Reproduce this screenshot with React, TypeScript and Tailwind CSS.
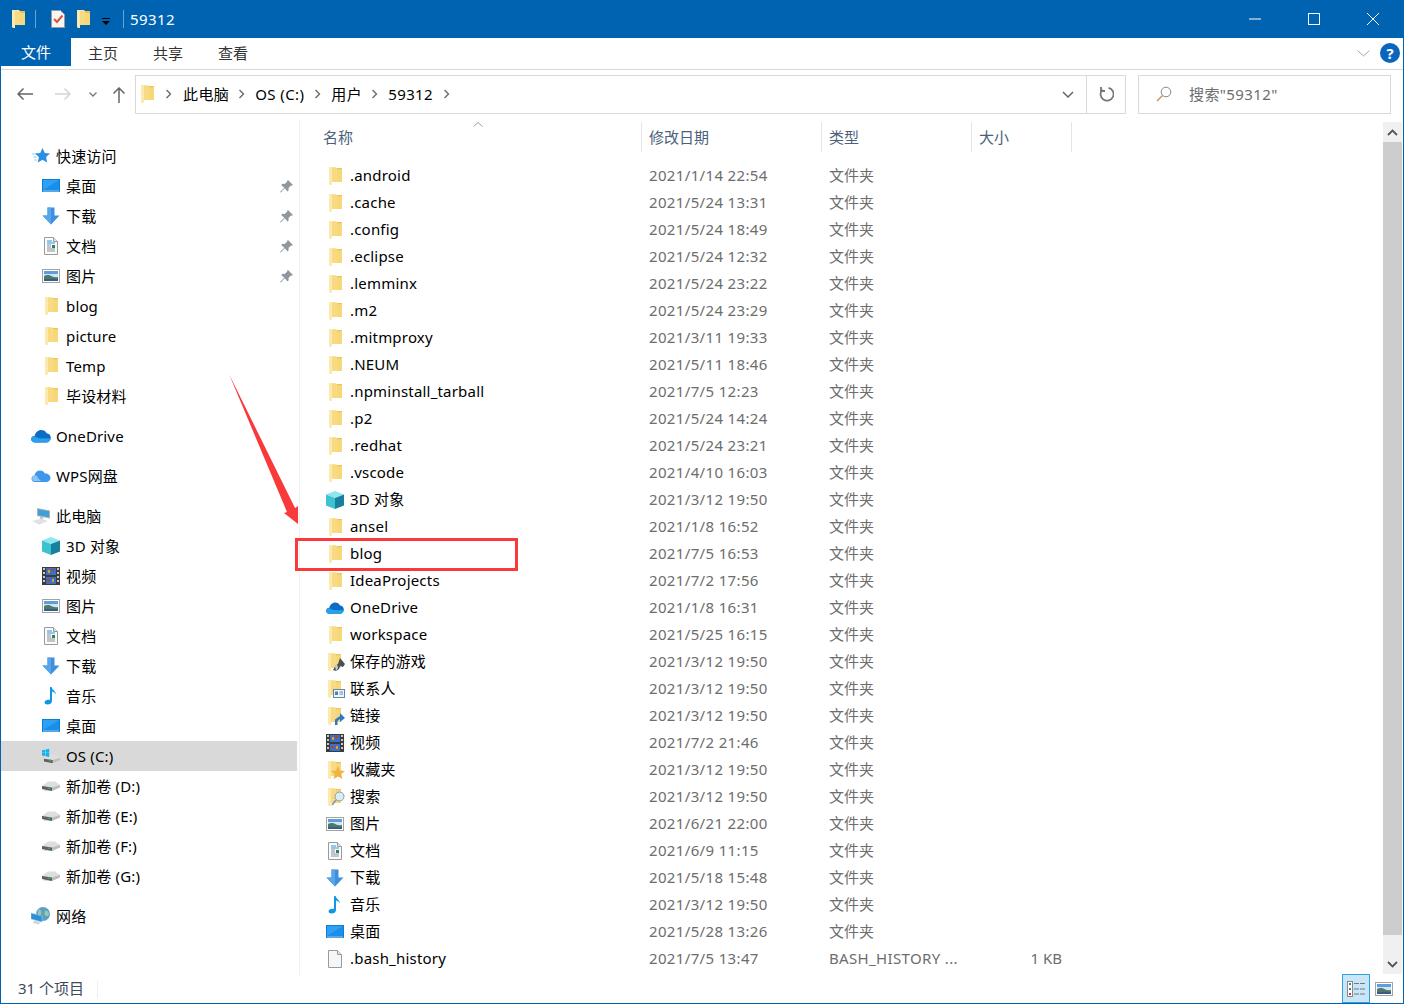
import type { ReactNode } from "react";

// --- 图标 ---
function Folder({ className = "" }: { className?: string }) {
  return (
    <svg className={className} width="13" height="18" viewBox="0 0 13 18">
      <path d="M3 1h5l1 1.200h4V15H3z" fill="#f7d878" />
      <path d="M8 1h5v1.500H8z" fill="#eec45a" />
      <path d="M0 0h7.500v14.500L3 15v3H1.500L0 17z" fill="#fae39a" />
      <path d="M3 1h4.500v13.500L3 15z" fill="#f8da82" />
      <path d="M0 0h3v18H1.500L0 17z" fill="#fbe9ae" />
    </svg>
  );
}

function Desktop() {
  return (
    <svg width="18" height="14" viewBox="0 0 18 14">
      <rect width="18" height="13" fill="#0a7fd6" />
      <path d="M1 1h16v10H1z" fill="#2da2f5" />
      <path d="M1 11l16-10v10z" fill="#1a8ee8" />
      <path d="M1 11.600h16v.8H1z" fill="#cfe9fb" />
    </svg>
  );
}

function Download() {
  return (
    <svg width="18" height="18" viewBox="0 0 18 18">
      <path d="M5.500 0.500h7v8H17.500L9 17.500 0.500 8.500h5z" fill="#3f8fde" />
      <path d="M5.500 0.500H9v17L0.500 8.500h5z" fill="#58a5ea" />
    </svg>
  );
}

function Doc() {
  return (
    <svg width="14" height="18" viewBox="0 0 14 18">
      <path d="M.5.500h9l4 4v13H.5z" fill="#fbfbfb" stroke="#9a9a9a" />
      <path d="M9.500.500v4h4" fill="#e4e4e4" stroke="#9a9a9a" />
      <path d="M3 4h5M3 6h8" stroke="#2b95e0" />
      <path d="M3 8h4M3 10h4M3 12h8M3 14h8" stroke="#8a8f96" />
      <rect x="8" y="8" width="3" height="3" fill="#2f7d63" />
    </svg>
  );
}

function Pic() {
  return (
    <svg width="18" height="14" viewBox="0 0 18 14">
      <rect x=".5" y=".5" width="17" height="13" fill="#fff" stroke="#a3a3a3" />
      <rect x="2" y="2" width="14" height="10" fill="#cfe4f5" />
      <rect x="2" y="2" width="14" height="3" fill="#5f9ddc" />
      <path d="M2 7c3-1.500 6-1 8 .5 2 .8 4 1 6 .5V12H2z" fill="#4d7a66" />
      <path d="M2 10h14v2H2z" fill="#3a5c85" />
    </svg>
  );
}

function Cube() {
  return (
    <svg width="18" height="18" viewBox="0 0 18 18">
      <path d="M9 0l9 3.500L9 7 0 3.500z" fill="#8fe6ee" />
      <path d="M0 3.500L9 7v11l-9-3.500z" fill="#3cc3d2" />
      <path d="M18 3.500L9 7v11l9-3.500z" fill="#1a7f9c" />
    </svg>
  );
}

function Film() {
  return (
    <svg width="18" height="18" viewBox="0 0 18 18">
      <rect width="18" height="18" fill="#3c3c3c" />
      <path d="M1 1h2v2H1zM1 5h2v2H1zM1 9h2v2H1zM1 13h2v2H1zM15 1h2v2h-2zM15 5h2v2h-2zM15 9h2v2h-2zM15 13h2v2h-2z" fill="#c9c9c9" />
      <rect x="4" y="1" width="10" height="7" fill="#3f6fc4" />
      <rect x="4" y="10" width="10" height="7" fill="#3f6fc4" />
      <path d="M6 3h2v3H6zM10 12h2v3h-2z" fill="#d9a02e" />
      <path d="M9 2h3v2H9zM5 12h3v2H5z" fill="#b0452d" />
    </svg>
  );
}

function Music() {
  return (
    <svg width="14" height="18" viewBox="0 0 14 18">
      <path d="M6 0h1.600c.4 3 4.600 4 4.400 8-.6-2-2.400-3-4-3.400V14c0 2.400-2.200 3.600-4.400 3.600C1.600 17.600.6 16.600.6 15.300.6 13.500 3 12.200 6 12.800z" fill="#0f97e6" />
    </svg>
  );
}

function OneDrive() {
  return (
    <svg width="20" height="14" viewBox="0 0 20 14">
      <path d="M4 13.500C1.800 13.500.2 12 .2 10.200.2 8.200 1.800 6.800 3.700 6.800 4.300 3.600 7 1 10.300 1c2.300 0 4.300 1.200 5.300 3.200 2.400.1 4.200 2 4.200 4.600 0 2.600-1.800 4.700-4.300 4.700z" fill="#0a6cc4" />
      <path d="M4 13.500C1.800 13.500.2 12 .2 10.200.2 8.600 1.300 7.400 2.800 7l5.400 2.200 11.400.3c-.4 2.300-2 4-4.100 4z" fill="#2aa0ea" />
    </svg>
  );
}

function WpsCloud() {
  return (
    <svg width="20" height="14" viewBox="0 0 20 14">
      <path d="M4 13C2 13 .5 11.500.5 9.700.5 8 1.800 6.600 3.500 6.400 4 3.400 6.400 1.500 9 1.500c2.200 0 4 1.200 4.900 3 3 -.2 5.600 1.700 5.600 4.500 0 2.300-1.900 4-4.200 4z" fill="#3f97ec" />
      <path d="M3 12a3 3 0 0 1 .8-5.800c1.600 0 3 1.300 3.200 3l3 2.800z" fill="#8cc4f5" />
    </svg>
  );
}

function Computer() {
  return (
    <svg width="20" height="18" viewBox="0 0 20 18">
      <path d="M6 1l13 2.500v8L6 9z" fill="#a9b4bd" />
      <path d="M7 2.200l11 2.100v6L7 8.200z" fill="#3f9fd8" />
      <path d="M1 14l9-2.500 7 2.500-9 3.500z" fill="#dfe2e5" />
      <path d="M9 9.500l3 .6v2l-3-.6z" fill="#b9c0c6" />
    </svg>
  );
}

function Drive() {
  return (
    <svg width="18" height="10" viewBox="0 0 18 10">
      <path d="M0 5l6-4.500h7l5 3.500v2L8 10H2z" fill="#dedede" />
      <path d="M0 5l10 1.500V10L0 8z" fill="#5f5f5f" />
      <path d="M10 6.500L18 4v2.500L10 10z" fill="#bdbdbd" />
      <rect x="5.500" y="6.500" width="2.500" height="1.500" fill="#35b24a" />
    </svg>
  );
}

function OsDrive() {
  return (
    <svg width="20" height="16" viewBox="0 0 20 16">
      <g transform="translate(2 6)"><Drive /></g>
      <path d="M0 1.500L3.500 1v3.300H0zM4 .9L8 0v4.300H4zM0 4.800h3.500V8L0 7.500zM4 4.800h4V9L4 8.200z" fill="#12b5ee" />
    </svg>
  );
}

function Network() {
  return (
    <svg width="20" height="18" viewBox="0 0 20 18">
      <circle cx="12" cy="7" r="7" fill="#5c9fc9" />
      <path d="M8 2c2 1 3 3 2 5s-3 2-3 0 0-4 1-5zM14 4c2-1 4 1 4 3s-3 3-4 1 0-3 0-4z" fill="#9acb9d" />
      <path d="M0 6l11 3v6L0 12z" fill="#2b8fd8" stroke="#9ec9e8" strokeWidth=".6" />
      <path d="M3 13.500l6 1.500-1 2.500-6-1.500z" fill="#cfd4d8" />
    </svg>
  );
}

function Star() {
  return (
    <svg width="18" height="16" viewBox="0 0 18 16">
      <path d="M10.500 0l2.300 5 5.200.6-3.900 3.500 1.100 5.400-4.700-2.800-4.700 2.800 1.100-5.400L3 5.600 8.200 5z" fill="#2b8fe0" />
      <path d="M0 6h4M1 9h4M2 12h3" stroke="#9ccdf2" />
    </svg>
  );
}

function Pin() {
  return (
    <svg width="13" height="13" viewBox="0 0 13 13">
      <path d="M8 0l5 5-1.200.8-.8-.3L8.500 8l.2 2.300L7.500 11.500 4.800 8.200.8 12.500 0 12l4.300-4.200L1.200 5l1.200-1.200 2.300.2L7.300 1.500 7.100.800z" fill="#8f979e" />
    </svg>
  );
}

function PlainFile() {
  return (
    <svg width="14" height="18" viewBox="0 0 14 18">
      <path d="M.5.500h9l4 4v13H.5z" fill="#f4f6f8" stroke="#9a9a9a" />
      <path d="M9.500.500v4h4" fill="#e4e4e4" stroke="#9a9a9a" />
    </svg>
  );
}

// フォルダ + 小さな印
function BadgedFolder({ badge }: { badge: ReactNode }) {
  return (
    <span className="relative block h-[18px] w-[18px]">
      <Folder className="ml-[2px]" />
      <span className="absolute bottom-0 right-[-1px] flex">{badge}</span>
    </span>
  );
}

const gameBadge = (
  <svg width="12" height="13" viewBox="0 0 12 13">
    <path d="M7 0l5 6-2 3-3-1-1 3-3 2-3-1 3-5 2-1z" fill="#4a4f55" />
    <path d="M2 8l2-2 1 4-2 3z" fill="#c9ced3" />
  </svg>
);
const contactBadge = (
  <svg width="12" height="9" viewBox="0 0 12 9">
    <rect x=".5" y=".5" width="11" height="8" fill="#eef4fa" stroke="#5f86ad" />
    <rect x="2" y="2.500" width="3" height="3.500" fill="#4a82b8" />
    <path d="M6.500 3H10M6.500 5H10" stroke="#6f8aa5" />
  </svg>
);
const linkBadge = (
  <svg width="12" height="12" viewBox="0 0 12 12">
    <path d="M2 12V6.500L7 3V0l5 5-5 4V6L4.500 8v4z" fill="#2f78c4" />
  </svg>
);
const starBadge = (
  <svg width="14" height="13" viewBox="0 0 14 13">
    <path d="M7 0l2 4.400 5 .5-3.700 3.200 1.100 4.900L7 10.400 2.600 13l1.100-4.900L0 4.900l5-.5z" fill="#f2b441" />
  </svg>
);
const searchBadge = (
  <svg width="14" height="15" viewBox="0 0 14 15">
    <circle cx="8.500" cy="5.500" r="4.500" fill="#d9edf7" stroke="#8c9aa5" />
    <path d="M5 9l-4 5" stroke="#8c9aa5" strokeWidth="1.800" />
  </svg>
);

const folder = <Folder />;

type Entry = { name: string; date: string; icon: ReactNode; type?: string; size?: string };

const FILES: Entry[] = [
  { name: ".android", date: "2021/1/14 22:54", icon: folder },
  { name: ".cache", date: "2021/5/24 13:31", icon: folder },
  { name: ".config", date: "2021/5/24 18:49", icon: folder },
  { name: ".eclipse", date: "2021/5/24 12:32", icon: folder },
  { name: ".lemminx", date: "2021/5/24 23:22", icon: folder },
  { name: ".m2", date: "2021/5/24 23:29", icon: folder },
  { name: ".mitmproxy", date: "2021/3/11 19:33", icon: folder },
  { name: ".NEUM", date: "2021/5/11 18:46", icon: folder },
  { name: ".npminstall_tarball", date: "2021/7/5 12:23", icon: folder },
  { name: ".p2", date: "2021/5/24 14:24", icon: folder },
  { name: ".redhat", date: "2021/5/24 23:21", icon: folder },
  { name: ".vscode", date: "2021/4/10 16:03", icon: folder },
  { name: "3D 对象", date: "2021/3/12 19:50", icon: <Cube /> },
  { name: "ansel", date: "2021/1/8 16:52", icon: folder },
  { name: "blog", date: "2021/7/5 16:53", icon: folder },
  { name: "IdeaProjects", date: "2021/7/2 17:56", icon: folder },
  { name: "OneDrive", date: "2021/1/8 16:31", icon: <OneDrive /> },
  { name: "workspace", date: "2021/5/25 16:15", icon: folder },
  { name: "保存的游戏", date: "2021/3/12 19:50", icon: <BadgedFolder badge={gameBadge} /> },
  { name: "联系人", date: "2021/3/12 19:50", icon: <BadgedFolder badge={contactBadge} /> },
  { name: "链接", date: "2021/3/12 19:50", icon: <BadgedFolder badge={linkBadge} /> },
  { name: "视频", date: "2021/7/2 21:46", icon: <Film /> },
  { name: "收藏夹", date: "2021/3/12 19:50", icon: <BadgedFolder badge={starBadge} /> },
  { name: "搜索", date: "2021/3/12 19:50", icon: <BadgedFolder badge={searchBadge} /> },
  { name: "图片", date: "2021/6/21 22:00", icon: <Pic /> },
  { name: "文档", date: "2021/6/9 11:15", icon: <Doc /> },
  { name: "下载", date: "2021/5/18 15:48", icon: <Download /> },
  { name: "音乐", date: "2021/3/12 19:50", icon: <Music /> },
  { name: "桌面", date: "2021/5/28 13:26", icon: <Desktop /> },
  { name: ".bash_history", date: "2021/7/5 13:47", icon: <PlainFile />, type: "BASH_HISTORY ...", size: "1 KB" },
];

function NavRow({ icon, label, level = 2, pinned, selected }: { icon: ReactNode; label: string; level?: 1 | 2; pinned?: boolean; selected?: boolean }) {
  return (
    <div className={`flex h-[30px] items-center ${level === 1 ? "pl-[30px]" : "pl-[41px]"} ${selected ? "bg-[#d9d9d9]" : ""}`}>
      <span className={`flex shrink-0 justify-center ${level === 1 ? "w-[20px] mr-[5px]" : "w-[18px] mr-[6px]"}`}>{icon}</span>
      <span className="flex-1 tracking-[0.15px] text-[#000]">{label}</span>
      {pinned && <span className="mr-[4px]"><Pin /></span>}
    </div>
  );
}

function Crumb({ label, wide }: { label: string; wide?: boolean }) {
  return (
    <>
      <span className="tracking-[0.4px] text-black">{label}</span>
      <svg className={`mr-[10px] ${wide ? "ml-[10px]" : "ml-[9px]"}`} width="7" height="10" viewBox="0 0 7 10">
        <path d="M1.500 1l4 4-4 4" fill="none" stroke="#6a6a6a" strokeWidth="1.400" />
      </svg>
    </>
  );
}

function HeaderCell({ label, className }: { label: string; className: string }) {
  return (
    <div className={`flex h-[30px] items-center border-r border-[#e5e5e5] text-[#4c607a] ${className}`}>{label}</div>
  );
}

export default function App() {
  return (
    <div className="relative flex h-[1004px] w-[1404px] flex-col overflow-hidden border border-[#0063b1] bg-white font-['Noto_Sans','Noto_Sans_CJK_SC',sans-serif] text-[15px] leading-none">
      {/* タイトルバー */}
      <div className="-mt-px flex h-[38px] shrink-0 items-center bg-[#0063b1] pl-[11px] text-white">
        <Folder />
        <span className="ml-[10px] h-[18px] w-px bg-[#6fa3cf]" />
        <svg className="ml-[15px]" width="14" height="18" viewBox="0 0 14 18">
          <path d="M.5.500h9l4 4v13H.5z" fill="#f6f6f6" stroke="#9a9a9a" />
          <path d="M3 9l3 3 5.500-6.500" fill="none" stroke="#e0532a" strokeWidth="2" />
        </svg>
        <span className="ml-[12px] flex"><Folder /></span>
        <svg className="ml-[12px] mt-[4px]" width="8" height="7" viewBox="0 0 8 7">
          <path d="M0 0h8v1H0zM0 3h8L4 7z" fill="#000" />
        </svg>
        <span className="ml-[13px] h-[18px] w-px bg-[#6fa3cf]" />
        <span className="ml-[6px] tracking-[0.4px]">59312</span>
        <div className="ml-auto flex items-center pr-[24px]">
          <svg width="12" height="2" viewBox="0 0 12 2"><path d="M0 1h12" stroke="#fff" /></svg>
          <svg className="ml-[47px]" width="12" height="12" viewBox="0 0 12 12"><rect x=".5" y=".5" width="11" height="11" fill="none" stroke="#fff" /></svg>
          <svg className="ml-[47px]" width="12" height="12" viewBox="0 0 12 12"><path d="M0 0l12 12M12 0L0 12" stroke="#fff" /></svg>
        </div>
      </div>

      {/* リボンタブ */}
      <div className="flex h-[32px] shrink-0 items-start border-b border-[#d9d9d9]">
        <div className="flex h-[28px] w-[70px] items-center justify-center bg-[#0063b1] text-white">文件</div>
        <div className="flex h-[30px] items-center text-[#333]">
          <span className="ml-[17px] w-[30px]">主页</span>
          <span className="ml-[35px] w-[30px]">共享</span>
          <span className="ml-[35px] w-[30px]">查看</span>
        </div>
        <div className="ml-auto flex h-[30px] items-center pr-[3px]">
          <svg width="13" height="7" viewBox="0 0 13 7"><path d="M.5.500L6.500 6l6-5.500" fill="none" stroke="#a6a6a6" /></svg>
          <span className="ml-[10px] flex h-[20px] w-[20px] items-center justify-center rounded-full bg-[#0a66bd] font-bold text-white">?</span>
        </div>
      </div>

      {/* アドレスバー */}
      <div className="flex h-[50px] shrink-0 items-center pb-[2px]">
        <div className="flex w-[134px] shrink-0 items-center pl-[16px]">
          <svg width="16" height="12" viewBox="0 0 16 12"><path d="M16 6H1M6.500.500L1 6l5.500 5.500" fill="none" stroke="#666" strokeWidth="1.500" /></svg>
          <svg className="ml-[22px]" width="16" height="12" viewBox="0 0 16 12"><path d="M0 6h15M9.500.500L15 6l-5.500 5.500" fill="none" stroke="#d4d4d4" strokeWidth="1.500" /></svg>
          <svg className="ml-[18px]" width="8" height="5" viewBox="0 0 8 5"><path d="M.500.500L4 4 7.500.500" fill="none" stroke="#777" strokeWidth="1.300" /></svg>
          <svg className="ml-[16px] mt-[2px]" width="12" height="16" viewBox="0 0 12 16"><path d="M6 16V1M.500 6.500L6 1l5.500 5.500" fill="none" stroke="#666" strokeWidth="1.500" /></svg>
        </div>
        <div className="flex h-[39px] w-[991px] items-center border border-[#d9d9d9] pl-[5px]">
          <Folder />
          <svg className="ml-[11px] mr-[11px]" width="7" height="10" viewBox="0 0 7 10"><path d="M1.500 1l4 4-4 4" fill="none" stroke="#6a6a6a" strokeWidth="1.400" /></svg>
          <Crumb label="此电脑" />
          <Crumb label="OS (C:)" wide />
          <Crumb label="用户" />
          <Crumb label="59312" wide />
          <div className="ml-auto flex h-full items-center">
            <svg className="mr-[12px]" width="12" height="7" viewBox="0 0 12 7"><path d="M1 1l5 5 5-5" fill="none" stroke="#666" strokeWidth="1.500" /></svg>
            <div className="flex h-full w-[39px] items-center justify-center border-l border-[#d9d9d9]">
              <svg width="15" height="16" viewBox="0 0 15 16"><path d="M9.500 1.800A6.500 6.500 0 1 1 3.500 3.500" fill="none" stroke="#777" strokeWidth="1.800" /><path d="M2 1v4h4" fill="none" stroke="#777" strokeWidth="1.800" /></svg>
            </div>
          </div>
        </div>
        <div className="ml-[12px] flex h-[39px] w-[253px] items-center border border-[#d9d9d9] pl-[17px] text-[#6d6d6d]">
          <svg width="16" height="16" viewBox="0 0 16 16"><circle cx="10" cy="6" r="4.800" fill="none" stroke="#888" /><path d="M6.500 9.500L1 15" stroke="#c98a4b" strokeWidth="1.200" /></svg>
          <span className="ml-[17px] tracking-[0.4px]">搜索"59312"</span>
        </div>
      </div>

      {/* 本体 */}
      <div className="flex min-h-0 flex-1">
        {/* ナビゲーション */}
        <nav className="w-[296px] shrink-0 pt-[21px]">
          <NavRow level={1} icon={<Star />} label="快速访问" />
          <NavRow icon={<Desktop />} label="桌面" pinned />
          <NavRow icon={<Download />} label="下载" pinned />
          <NavRow icon={<Doc />} label="文档" pinned />
          <NavRow icon={<Pic />} label="图片" pinned />
          <NavRow icon={<Folder />} label="blog" />
          <NavRow icon={<Folder />} label="picture" />
          <NavRow icon={<Folder />} label="Temp" />
          <NavRow icon={<Folder />} label="毕设材料" />
          <div className="mt-[10px]"><NavRow level={1} icon={<OneDrive />} label="OneDrive" /></div>
          <div className="mt-[10px]"><NavRow level={1} icon={<WpsCloud />} label="WPS网盘" /></div>
          <div className="mt-[10px]"><NavRow level={1} icon={<Computer />} label="此电脑" /></div>
          <NavRow icon={<Cube />} label="3D 对象" />
          <NavRow icon={<Film />} label="视频" />
          <NavRow icon={<Pic />} label="图片" />
          <NavRow icon={<Doc />} label="文档" />
          <NavRow icon={<Download />} label="下载" />
          <NavRow icon={<Music />} label="音乐" />
          <NavRow icon={<Desktop />} label="桌面" />
          <NavRow icon={<OsDrive />} label="OS (C:)" selected />
          <NavRow icon={<Drive />} label="新加卷 (D:)" />
          <NavRow icon={<Drive />} label="新加卷 (E:)" />
          <NavRow icon={<Drive />} label="新加卷 (F:)" />
          <NavRow icon={<Drive />} label="新加卷 (G:)" />
          <div className="mt-[10px]"><NavRow level={1} icon={<Network />} label="网络" /></div>
        </nav>

        {/* ファイル一覧 */}
        <main className="ml-[2px] flex min-w-0 flex-1 border-l border-[#f0f0f0]">
          <div className="relative min-w-0 flex-1 pt-[2px]">
            <svg className="absolute left-[173px] top-[2px]" width="10" height="5" viewBox="0 0 10 5"><path d="M.5 4.500L5 .5l4.500 4" fill="none" stroke="#a0a0a0" /></svg>
            <div className="flex">
              <HeaderCell label="名称" className="ml-[16px] w-[326px] pl-[7px]" />
              <HeaderCell label="修改日期" className="w-[180px] pl-[7px]" />
              <HeaderCell label="类型" className="w-[150px] pl-[7px]" />
              <HeaderCell label="大小" className="w-[100px] pl-[7px]" />
            </div>
            <div className="mt-[10px]">
              {FILES.map((f) => (
                <div key={f.name} className="flex h-[27px] items-center">
                  <div className="flex w-[349px] shrink-0 items-center pl-[26px]">
                    <span className="mr-[6px] flex w-[18px] shrink-0 items-center justify-center">{f.icon}</span>
                    <span className="tracking-[0.2px] text-black">{f.name}</span>
                  </div>
                  <span className="w-[180px] shrink-0 tracking-[0.35px] text-[#6d6d6d]">{f.date}</span>
                  <span className={`w-[150px] shrink-0 text-[#6d6d6d] ${f.type ? "tracking-[0.35px]" : ""}`}>{f.type ?? "文件夹"}</span>
                  <span className="w-[83px] shrink-0 text-right text-[#6d6d6d]">{f.size}</span>
                </div>
              ))}
            </div>
          </div>
          {/* スクロールバー */}
          <div className="mr-px mt-[2px] flex h-[852px] w-[19px] shrink-0 flex-col bg-[#f0f0f0]">
            <div className="flex h-[20px] items-center justify-center">
              <svg width="11" height="7" viewBox="0 0 11 7"><path d="M1 6l4.500-4.500L10 6" fill="none" stroke="#555" strokeWidth="1.800" /></svg>
            </div>
            <div className="h-[793px] bg-[#cdcdcd]" />
            <div className="mt-auto flex h-[20px] items-center justify-center">
              <svg width="11" height="7" viewBox="0 0 11 7"><path d="M1 1l4.500 4.500L10 1" fill="none" stroke="#555" strokeWidth="1.800" /></svg>
            </div>
          </div>
        </main>
      </div>

      {/* ステータスバー */}
      <div className="flex h-[28px] shrink-0 items-center pl-[17px] text-[#3c4a5c]">
        <span className="pb-[2px]">31 个项目</span>
        <span className="ml-[13px] h-[17px] w-px bg-[#eeeeee]" />
        <div className="ml-auto mr-[10px] flex h-full items-center">
          <div className="-mt-px flex h-[29px] w-[28px] flex-col items-center justify-center border border-[#2ea0dc] bg-[#c8e6f7]">
            <svg width="18" height="16" viewBox="0 0 18 16">
              <rect x=".5" y=".5" width="5" height="15" fill="#fff" stroke="#888" />
              <rect x="2" y="2" width="2" height="2" fill="#3f8a7a" />
              <rect x="2" y="7" width="2" height="2" fill="#5a7d4a" />
              <rect x="2" y="12" width="2" height="2" fill="#c8392b" />
              <path d="M7 2.500h5M13 2.500h5M7 8h5M13 8h5M7 13h5M13 13h5" stroke="#777" />
            </svg>
          </div>
          <span className="ml-[5px] flex"><Pic /></span>
        </div>
      </div>

      {/* 注釈：矢印と枠 */}
      <svg className="pointer-events-none absolute left-[227px] top-[372px]" width="72" height="152" viewBox="0 0 72 152">
        <path d="M1 1L67 135 70 133 70 151 56 140 59 139z" fill="#f93a3a" />
      </svg>
      <div className="pointer-events-none absolute left-[294px] top-[537px] h-[33px] w-[223px] border-[3px] border-[#f93a3a]" />
    </div>
  );
}
